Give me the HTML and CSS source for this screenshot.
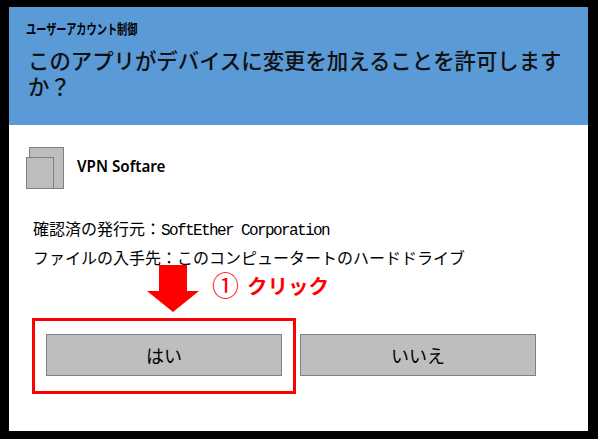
FILE: index.html
```html
<!DOCTYPE html>
<html lang="ja">
<head>
<meta charset="utf-8">
<title>ユーザーアカウント制御</title>
<link rel="stylesheet" href="styles.css">
</head>
<body>
<main class="dialog">
  <header class="banner">
    <div class="caption">ユーザーアカウント制御</div>
    <h1 class="question">このアプリがデバイスに変更を加えることを許可しますか？</h1>
  </header>
  <section class="content">
    <div class="app">
      <svg class="app-icon" width="38" height="43" viewBox="0 0 38 43" aria-hidden="true">
        <rect x="3.5" y="0.5" width="34" height="41" fill="#bdbdbd" stroke="#808080"/>
        <rect x="0.5" y="10.5" width="27" height="31" fill="#bdbdbd" stroke="#808080"/>
      </svg>
      <span class="app-name">VPN Softare</span>
    </div>
    <p class="info publisher">確認済の発行元：<span class="latin">SoftEther Corporation</span></p>
    <p class="info origin">ファイルの入手先：このコンピュータートのハードドライブ</p>
    <div class="actions">
      <button class="btn" type="button">はい</button>
      <button class="btn" type="button">いいえ</button>
    </div>
  </section>
</main>
<div class="highlight"></div>
<svg class="arrow" width="52" height="47" viewBox="0 0 52 47" aria-hidden="true">
  <polygon points="12,0 40,0 40,26 52,26 26,47 0,26 12,26" fill="#ff0000"/>
</svg>
<div class="callout"><span class="callout-num">①</span><span>クリック</span></div>
</body>
</html>
```
FILE: styles.css
```css
* { box-sizing: border-box; }
html, body { margin: 0; height: 100%; }
body {
  position: relative;
  background: #000;
  padding: 7px 10px 8px 9px;
  overflow: hidden;
  font-family: "Noto Sans CJK JP", sans-serif;
  color: #000;
}
.dialog {
  height: 424px;
  display: flex;
  flex-direction: column;
  background: #fff;
}
.banner {
  height: 118px;
  flex: none;
  background: #5a9ad6;
  padding: 13px 0 0 17px;
}
.caption {
  font-size: 13.5px;
  line-height: 17px;
  font-weight: 700;
  width: 149px;
  transform: scaleX(0.755);
  transform-origin: left center;
  white-space: nowrap;
}
.question {
  margin: 10px 0 0 2px;
  width: 540px;
  font-size: 21.4px;
  line-height: 26px;
  font-weight: 500;
  color: #111;
}
.content {
  flex: 1;
  padding: 22px 0 0 17px;
}
.app {
  display: flex;
  align-items: center;
  gap: 13px;
  height: 43px;
}
.app-name {
  font-family: "Noto Sans", sans-serif;
  font-size: 15.2px;
  font-weight: 600;
  padding-bottom: 6px;
}
.info {
  margin: 0 0 0 7px;
  font-size: 16px;
  line-height: 20px;
  white-space: nowrap;
}
.publisher { margin-top: 28px; }
.origin { margin-top: 6px; }
.latin {
  font-family: "Liberation Mono", monospace;
  letter-spacing: -1.6px;
}
.actions {
  display: flex;
  gap: 18px;
  margin: 67px 0 0 20px;
}
.btn {
  width: 236px;
  height: 42px;
  padding: 0;
  background: #bebebe;
  border: 1px solid #808080;
  font: 400 18px "Noto Sans CJK JP", sans-serif;
  color: #000;
}
.highlight {
  position: absolute;
  left: 32px;
  top: 318px;
  width: 264px;
  height: 76px;
  border: 3px solid #ff0000;
}
.arrow {
  position: absolute;
  left: 147px;
  top: 265px;
}
.callout {
  position: absolute;
  left: 212px;
  top: 272px;
  display: flex;
  align-items: center;
  gap: 8px;
  font-size: 20.5px;
  line-height: 26px;
  font-weight: 700;
  color: #ff0000;
  white-space: nowrap;
}
.callout-num {
  font-size: 27px;
  font-weight: 400;
}
```
